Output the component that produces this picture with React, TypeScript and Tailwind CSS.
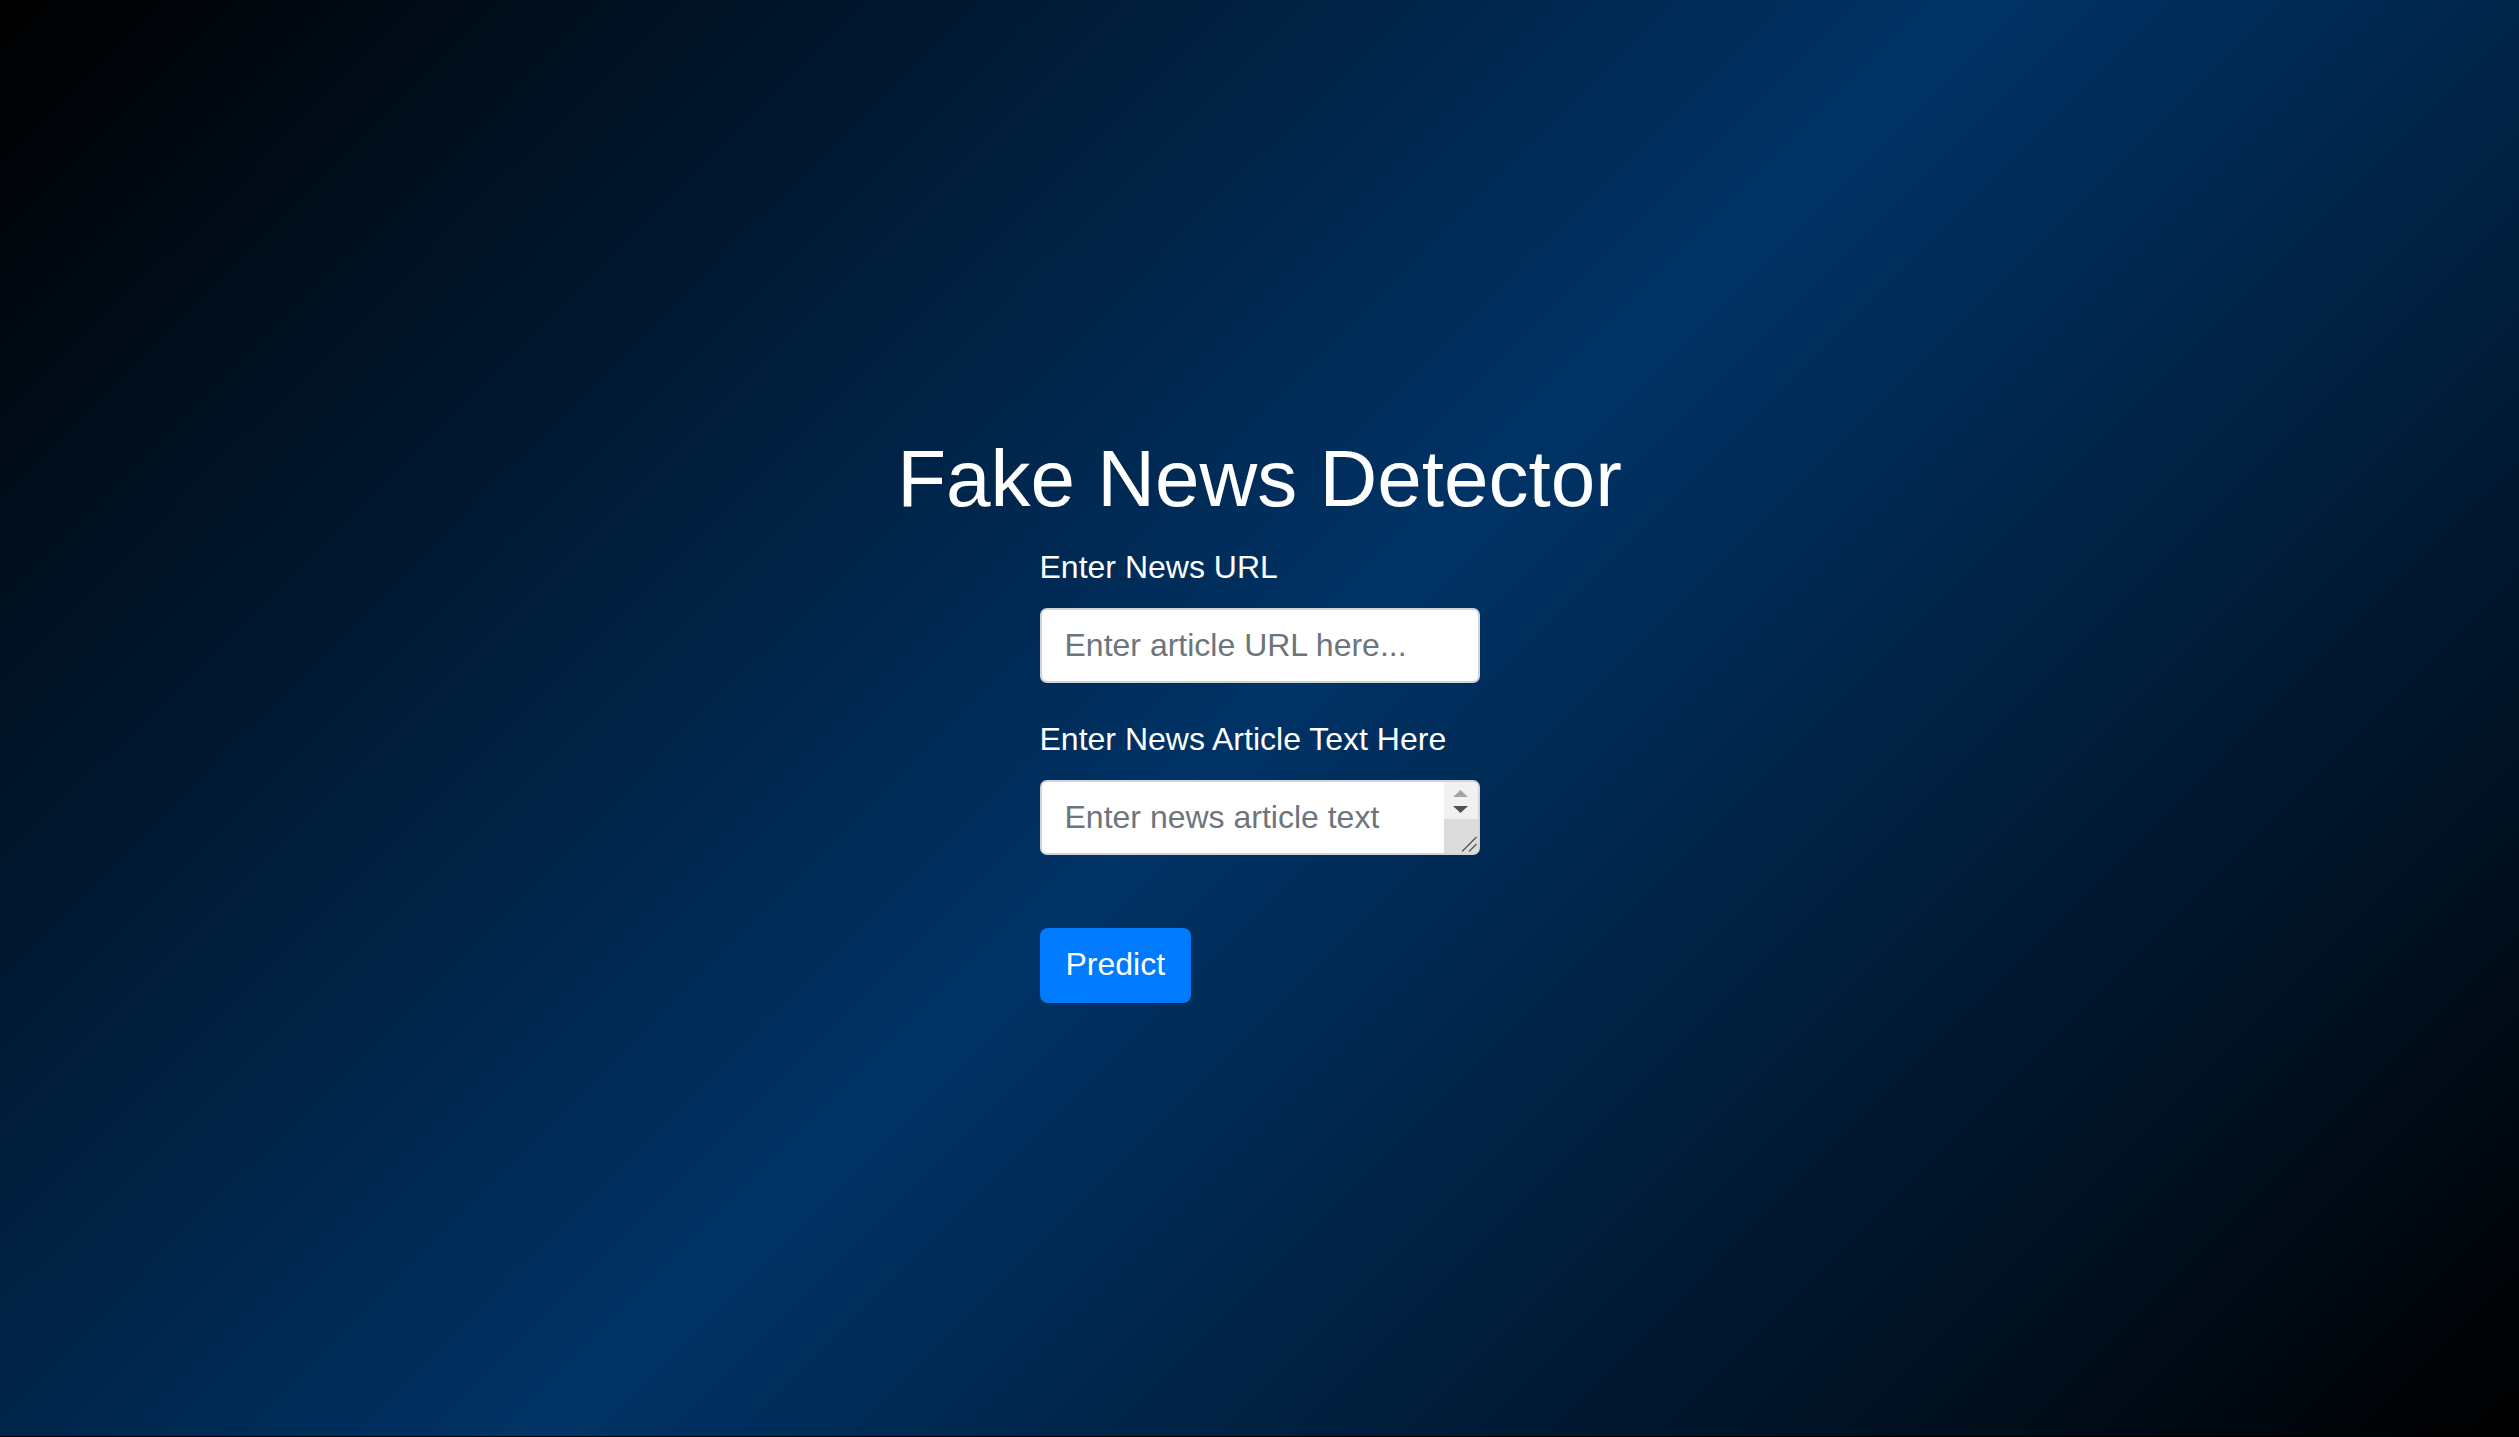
import React from 'react'

export default function App() {
  return (
    <div className="min-h-screen bg-black font-['Liberation_Sans',Arial,sans-serif]">
      <main className="flex h-[1436px] flex-col items-center justify-center bg-[linear-gradient(135deg,#000000_0%,#003366_50%,#000000_100%)] text-white">
        <h1 className="text-[80px] leading-[92px] font-normal">Fake News Detector</h1>

        <form className="mt-[24px] flex w-[440px] flex-col items-start" onSubmit={(e) => e.preventDefault()}>
          <label htmlFor="news-url" className="text-[32px] leading-[37px]">Enter News URL</label>
          <input
            id="news-url"
            type="text"
            placeholder="Enter article URL here..."
            className="mt-[22px] h-[75px] w-full rounded-[7px] border-2 border-[#ced4da] bg-white px-[23px] text-[32px] text-[#495057] outline-none placeholder:text-[#6c757d]"
          />

          <label htmlFor="news-text" className="mt-[38px] text-[32px] leading-[37px]">Enter News Article Text Here</label>
          <div className="mt-[22px] flex h-[75px] w-full overflow-hidden rounded-[7px] border-2 border-[#ced4da] bg-white">
            <textarea
              id="news-text"
              rows={1}
              placeholder="Enter news article text"
              className="min-w-0 flex-1 resize-none overflow-hidden bg-white px-[23px] pt-[17px] text-[32px] leading-[37px] text-[#495057] outline-none placeholder:text-[#6c757d]"
            />
            {/* fake native scrollbar + resizer */}
            <div aria-hidden className="flex w-[34px] flex-col">
              <div className="flex h-[37px] flex-col items-center gap-[9px] bg-[#f1f1f1] pt-[8px]">
                <svg width="15" height="7" viewBox="0 0 15 7"><path d="M7.5 0L15 7H0Z" fill="#a3a3a3" /></svg>
                <svg width="15" height="7" viewBox="0 0 15 7"><path d="M0 0H15L7.5 7Z" fill="#505050" /></svg>
              </div>
              <div className="relative flex-1 bg-[#dcdcdc]">
                <svg className="absolute bottom-0 right-0" width="18" height="18" viewBox="0 0 18 18">
                  <path d="M2 16.5L16.5 2M9 16.5L16.5 9" stroke="#555555" strokeWidth="1.3" fill="none" />
                </svg>
              </div>
            </div>
          </div>

          <button type="submit" className="mt-[73px] h-[75px] rounded-[8px] bg-[#007bff] px-[26px] pb-[3px] text-[32px] text-white">
            Predict
          </button>
        </form>
      </main>
    </div>
  )
}
